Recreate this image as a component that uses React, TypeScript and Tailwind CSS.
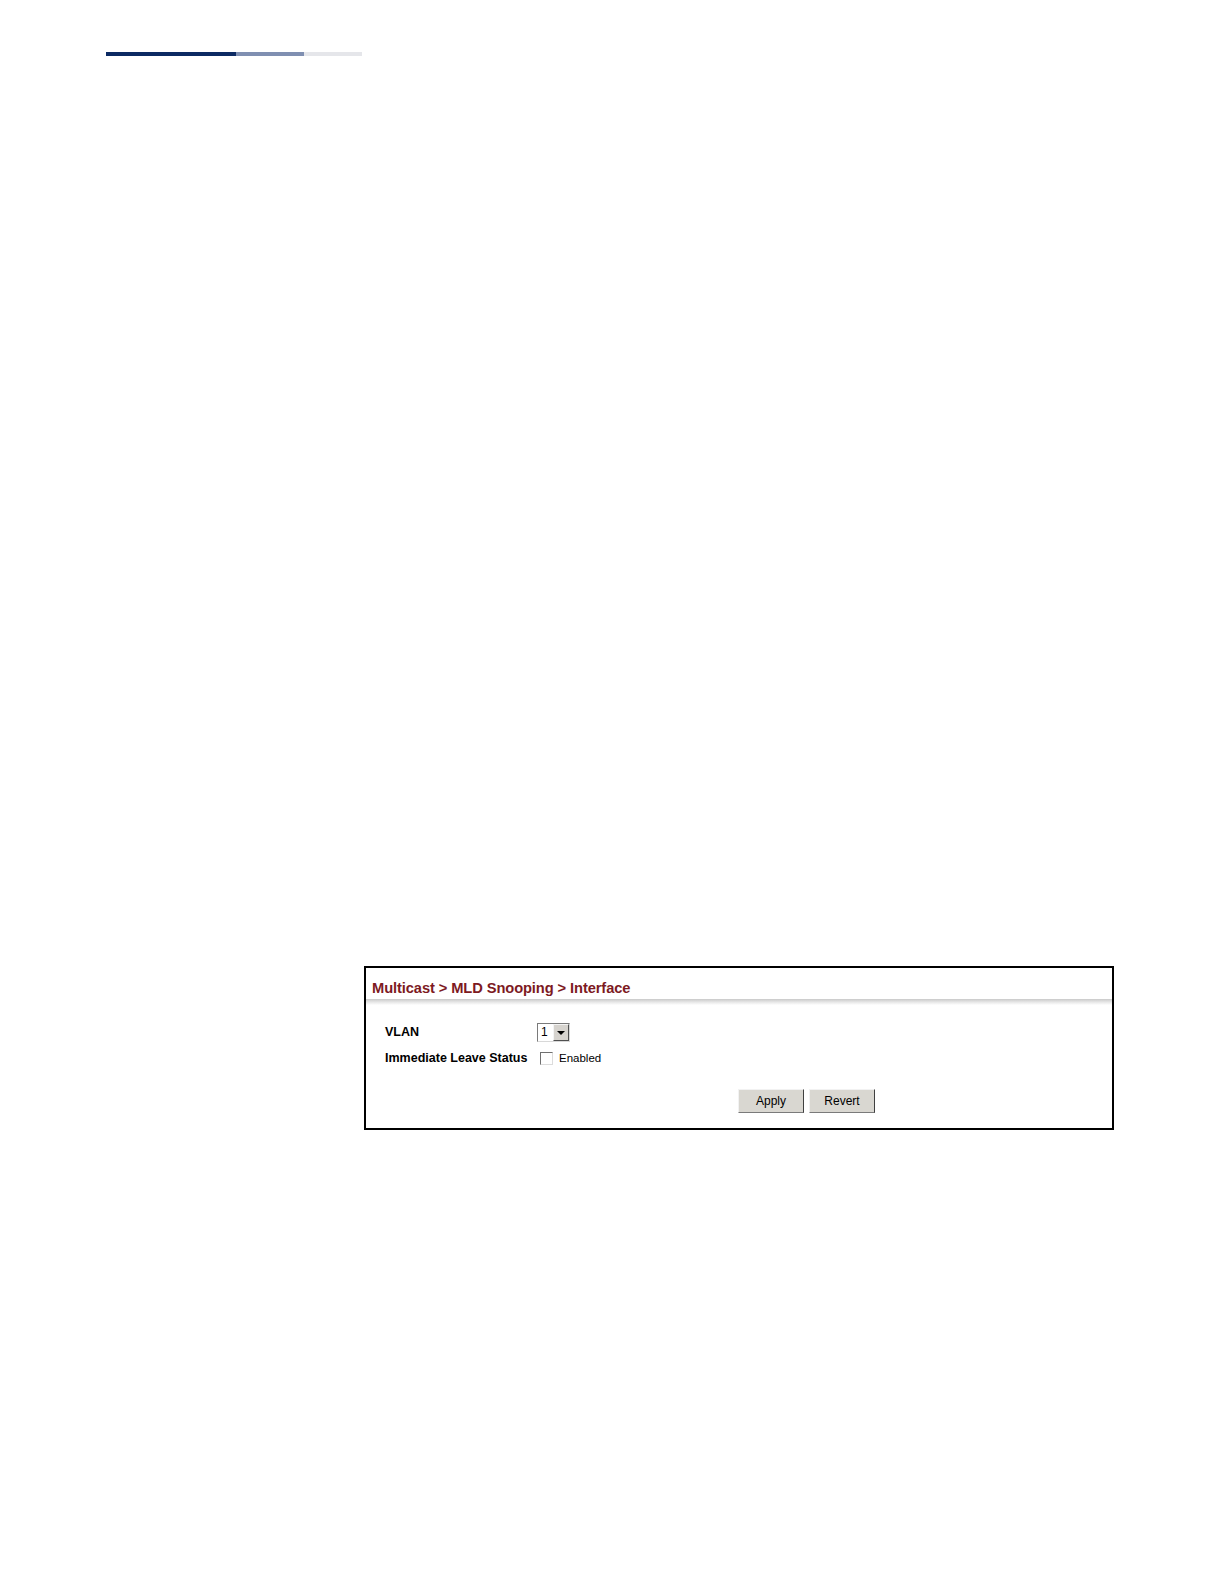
export default function App() {
  return (
    <div className="relative w-[1224px] h-[1584px] bg-white font-['Liberation_Sans',Arial,sans-serif] text-black">
      {/* top rule */}
      <div className="pt-[52px] pl-[106px] flex">
        <div className="w-[130px] h-[4px] bg-[#0c2a63]" />
        <div className="w-[68px] h-[4px] bg-[#7f8fb1]" />
        <div className="w-[58px] h-[4px] bg-[#e5e6ea]" />
      </div>

      {/* screenshot frame */}
      <div className="mt-[910px] ml-[364px] w-[750px] h-[164px] border-2 border-black">
        <div className="pt-[12px] pl-[6px] h-[31px] text-[14.7px] leading-[17px] font-bold text-[#7d1a1f] tracking-[-0.1px]">
          Multicast &gt; MLD Snooping &gt; Interface
        </div>
        <div className="h-[6px] bg-gradient-to-b from-[#c9c9c9] via-[#e6e6e6] to-white" />

        <div className="pl-[19px] pt-[18px]">
          <div className="flex items-center h-[19px]">
            <div className="w-[152px] text-[12.5px] font-bold leading-none">VLAN</div>
            <div className="flex h-[19px] w-[33px] border border-[#7a7a7a] border-r-[#d8d8d8] border-b-[#d8d8d8] bg-white">
              <div className="flex-1 pl-[3px] text-[12px] leading-[17px]">1</div>
              <div className="w-[16px] h-[17px] bg-[#d6d3ce] border border-[#f4f4f4] border-r-[#505050] border-b-[#505050] flex items-center justify-center">
                <svg width="8" height="4" viewBox="0 0 8 4">
                  <path d="M0 0 L8 0 L4 4 Z" fill="#000" />
                </svg>
              </div>
            </div>
          </div>

          <div className="flex items-center h-[15px] mt-[9px]">
            <div className="w-[155px] text-[12.5px] font-bold leading-none">Immediate Leave Status</div>
            <div className="w-[13px] h-[13px] border border-[#707070] border-r-[#dcdcdc] border-b-[#dcdcdc] bg-white" />
            <div className="ml-[6px] text-[11.5px] leading-none">Enabled</div>
          </div>
        </div>

        <div className="flex pl-[372px] pt-[23px] gap-[5px]">
          <button className="w-[66px] h-[24px] bg-[#d9d7d1] border border-[#f2f2f2] border-r-[#404040] border-b-[#7a7a7a] text-[12px] leading-none">
            Apply
          </button>
          <button className="w-[66px] h-[24px] bg-[#d9d7d1] border border-[#f2f2f2] border-r-[#404040] border-b-[#7a7a7a] text-[12px] leading-none">
            Revert
          </button>
        </div>
      </div>
    </div>
  )
}
